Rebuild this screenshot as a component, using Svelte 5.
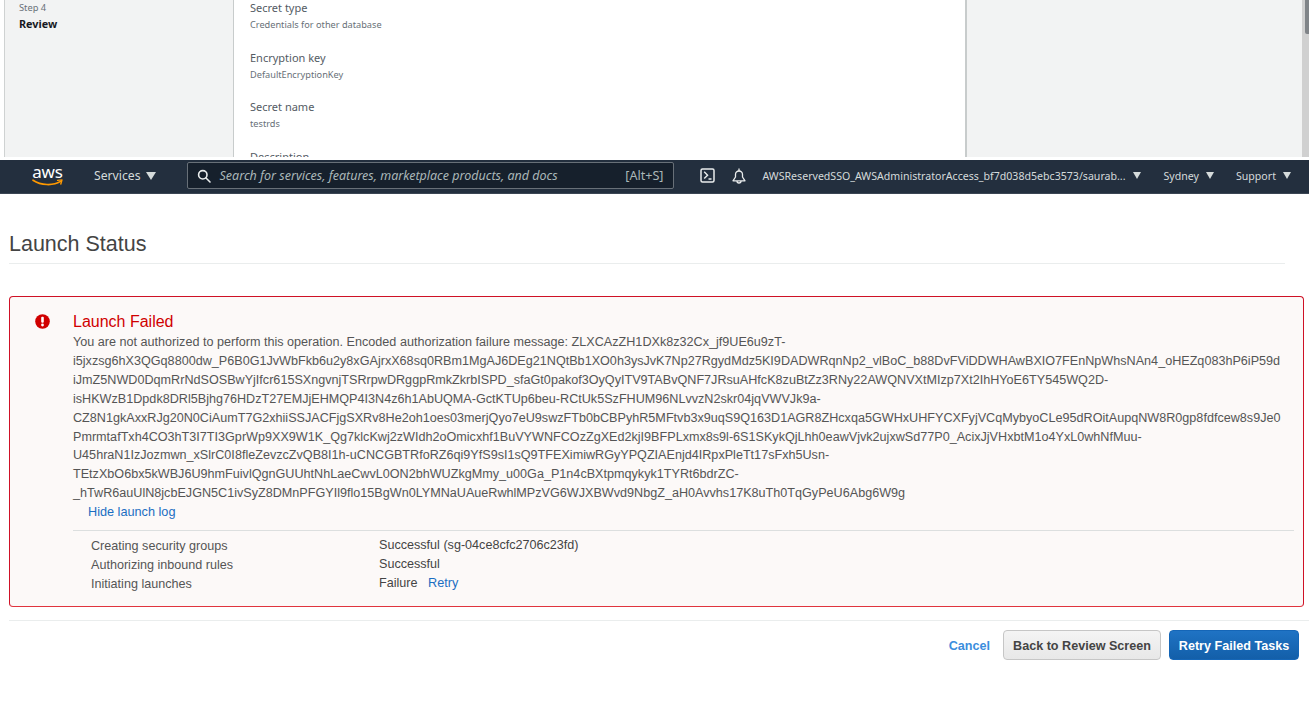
<script>
  const lines = [
    "You are not authorized to perform this operation. Encoded authorization failure message: ZLXCAzZH1DXk8z32Cx_jf9UE6u9zT-",
    "i5jxzsg6hX3QGq8800dw_P6B0G1JvWbFkb6u2y8xGAjrxX68sq0RBm1MgAJ6DEg21NQtBb1XO0h3ysJvK7Np27RgydMdz5KI9DADWRqnNp2_vlBoC_b88DvFViDDWHAwBXIO7FEnNpWhsNAn4_oHEZq083hP6iP59d",
    "iJmZ5NWD0DqmRrNdSOSBwYjIfcr615SXngvnjTSRrpwDRggpRmkZkrbISPD_sfaGt0pakof3OyQyITV9TABvQNF7JRsuAHfcK8zuBtZz3RNy22AWQNVXtMIzp7Xt2IhHYoE6TY545WQ2D-",
    "isHKWzB1Dpdk8DRl5Bjhg76HDzT27EMJjEHMQP4I3N4z6h1AbUQMA-GctKTUp6beu-RCtUk5SzFHUM96NLvvzN2skr04jqVWVJk9a-",
    "CZ8N1gkAxxRJg20N0CiAumT7G2xhiiSSJACFjgSXRv8He2oh1oes03merjQyo7eU9swzFTb0bCBPyhR5MFtvb3x9uqS9Q163D1AGR8ZHcxqa5GWHxUHFYCXFyjVCqMybyoCLe95dROitAupqNW8R0gp8fdfcew8s9Je0",
    "PmrmtafTxh4CO3hT3I7TI3GprWp9XX9W1K_Qg7klcKwj2zWIdh2oOmicxhf1BuVYWNFCOzZgXEd2kjI9BFPLxmx8s9l-6S1SKykQjLhh0eawVjvk2ujxwSd77P0_AcixJjVHxbtM1o4YxL0whNfMuu-",
    "U45hraN1IzJozmwn_xSlrC0I8fleZevzcZvQB8I1h-uCNCGBTRfoRZ6qi9YfS9sI1sQ9TFEXimiwRGyYPQZIAEnjd4IRpxPleTt17sFxh5Usn-",
    "TEtzXbO6bx5kWBJ6U9hmFuivlQgnGUUhtNhLaeCwvL0ON2bhWUZkgMmy_u00Ga_P1n4cBXtpmqykyk1TYRt6bdrZC-",
    "_hTwR6auUlN8jcbEJGN5C1ivSyZ8DMnPFGYIl9flo15BgWn0LYMNaUAueRwhlMPzVG6WJXBWvd9NbgZ_aH0Avvhs17K8uTh0TqGyPeU6Abg6W9g"
  ];
  const details = [
    ["Secret type", "Credentials for other database"],
    ["Encryption key", "DefaultEncryptionKey"],
    ["Secret name", "testrds"],
    ["Description", ""]
  ];
</script>

<div class="page">
  <section class="wizard">
    <aside class="steps">
      <div class="step-no">Step 4</div>
      <div class="step-name">Review</div>
    </aside>
    <div class="review">
      {#each details as [label, value]}
        <div class="field">
          <div class="label">{label}</div>
          <div class="value">{value}</div>
        </div>
      {/each}
    </div>
    <div class="rail"></div>
    <div class="scrollbar"><div class="thumb"></div></div>
  </section>

  <nav class="nav">
    <div class="logo">
      <span>aws</span>
      <svg width="31" height="8" viewBox="0 0 31 8" fill="none">
        <path d="M1 1.2C9 6.5 21 7 28.5 2.4" stroke="#f90" stroke-width="1.7" stroke-linecap="round"/>
        <path d="M25.6 1.4L30 .9 28.8 5" stroke="#f90" stroke-width="1.4" stroke-linecap="round" stroke-linejoin="round"/>
      </svg>
    </div>
    <div class="services">Services <i class="tri big"></i></div>
    <div class="search">
      <svg width="14" height="14" viewBox="0 0 14 14" fill="none" stroke="#eaeded" stroke-width="1.6">
        <circle cx="5.8" cy="5.8" r="4.2"/>
        <path d="M9 9l4 4" stroke-linecap="round"/>
      </svg>
      <span class="ph">Search for services, features, marketplace products, and docs</span>
      <span class="kbd">[Alt+S]</span>
    </div>
    <svg class="cli" width="15" height="15" viewBox="0 0 15 15" fill="none" stroke="#eaeded" stroke-width="1.5">
      <rect x="1" y="1" width="13" height="13" rx="1.5"/>
      <path d="M4.2 3.8l3.4 3.4-3.4 3.4M8.5 11h3" stroke-width="1.4"/>
    </svg>
    <svg class="bell" width="14" height="17" viewBox="0 0 14 17" fill="none" stroke="#eaeded" stroke-width="1.3">
      <path d="M1 12.8h12L10.5 9V6.5a3.5 3.5 0 0 0-7 0V9z" stroke-linejoin="round"/>
      <path d="M7 .6v2.4M5 13a2 2 0 0 0 4 0"/>
    </svg>
    <div class="account">AWSReservedSSO_AWSAdministratorAccess_bf7d038d5ebc3573/saurab...</div>
    <i class="tri"></i>
    <div class="region">Sydney</div>
    <i class="tri"></i>
    <div class="support">Support</div>
    <i class="tri"></i>
  </nav>

  <main class="content">
    <h1>Launch Status</h1>

    <div class="alert">
      <svg class="alert-icon" width="15" height="15" viewBox="0 0 15 15">
        <circle cx="7.5" cy="7.5" r="7.3" fill="#d00000"/>
        <rect x="6.2" y="2.8" width="2.6" height="6" rx="1" fill="#fff"/>
        <circle cx="7.5" cy="11" r="1.4" fill="#fff"/>
      </svg>
      <div class="alert-body">
        <h2>Launch Failed</h2>
        <div class="message">
          {#each lines as line}
            <div>{line}</div>
          {/each}
        </div>
        <a class="link hide" href="#log">Hide launch log</a>
        <div class="log">
          <div class="log-col names">
            <div>Creating security groups</div>
            <div>Authorizing inbound rules</div>
            <div>Initiating launches</div>
          </div>
          <div class="log-col results">
            <div>Successful (sg-04ce8cfc2706c23fd)</div>
            <div>Successful</div>
            <div>Failure <a class="link retry" href="#retry">Retry</a></div>
          </div>
        </div>
      </div>
    </div>

    <footer class="actions">
      <a class="cancel" href="#cancel">Cancel</a>
      <button class="btn back">Back to Review Screen</button>
      <button class="btn primary">Retry Failed Tasks</button>
    </footer>
  </main>
</div>

<style>
  :global(body) {
    margin: 0;
    background: #fff;
  }
  .page {
    width: 1309px;
    height: 701px;
    overflow: hidden;
    font-family: "Liberation Sans", Arial, sans-serif;
  }

  .wizard {
    display: flex;
    height: 157px;
    padding-left: 4px;
    overflow: hidden;
    font-family: "Noto Sans", sans-serif;
    box-sizing: border-box;
  }
  .steps {
    width: 214px;
    padding: 1px 0 0 14px;
    background: #f2f3f3;
    border-left: 1px solid #cfd2d2;
    border-right: 1px solid #c8cccc;
  }
  .step-no {
    font-size: 9.3px;
    line-height: 14px;
    color: #687078;
  }
  .step-name {
    font-size: 10.8px;
    font-weight: 700;
    line-height: 18px;
    color: #16191f;
  }
  .review {
    width: 715px;
    padding: 0 0 0 16px;
    border-right: 2px solid #c8cccc;
  }
  .field {
    height: 49.6px;
  }
  .label {
    font-size: 11px;
    line-height: 15px;
    color: #545b64;
  }
  .value {
    margin-top: 3px;
    font-size: 9.2px;
    line-height: 14px;
    color: #687078;
  }
  .rail {
    width: 335px;
    background: #f2f3f3;
  }
  .scrollbar {
    width: 7px;
    background: #d0d0d0;
  }
  .thumb {
    height: 34px;
    margin-left: 3px;
    background: #808488;
    border-radius: 0 0 0 2px;
  }

  .nav {
    display: flex;
    align-items: center;
    margin-top: 3px;
    padding-bottom: 2px;
    box-sizing: border-box;
    height: 34px;
    background: #232f3e;
    border-bottom: 1px solid #3a4553;
    font-family: "Noto Sans", sans-serif;
    color: #d5dbdb;
    font-size: 11px;
  }
  .logo {
    display: flex;
    flex-direction: column;
    align-items: center;
    width: 31px;
    margin-left: 32px;
    margin-top: 0;
    color: #fff;
  }
  .logo span {
    font-size: 17px;
    line-height: 13px;
    letter-spacing: -0.2px;
  }
  .logo svg {
    margin-top: 1px;
  }
  .services {
    display: flex;
    align-items: center;
    gap: 5px;
    margin-left: 31px;
    font-size: 12.2px;
  }
  .tri {
    display: block;
    width: 0;
    height: 0;
    border-left: 4.5px solid transparent;
    border-right: 4.5px solid transparent;
    border-top: 7px solid #d5dbdb;
  }
  .tri.big {
    border-left-width: 5.5px;
    border-right-width: 5.5px;
    border-top-width: 8px;
  }
  .search {
    display: flex;
    align-items: center;
    box-sizing: border-box;
    width: 487px;
    height: 27px;
    margin-left: 31px;
    padding: 0 9px;
    background: #16202c;
    border: 1px solid #687078;
    border-radius: 2px;
  }
  .ph {
    flex: 1;
    margin-left: 9px;
    font-size: 12.5px;
    font-style: italic;
    color: #aab7b8;
    white-space: nowrap;
  }
  .kbd {
    font-size: 12.6px;
    color: #aab7b8;
  }
  .cli {
    margin-left: 26px;
  }
  .bell {
    margin-left: 17px;
    margin-top: 2px;
  }
  .account {
    width: 363px;
    margin-left: 17px;
    margin-right: 7px;
    font-size: 10.6px;
    white-space: nowrap;
  }
  .region {
    margin-left: 23px;
    margin-right: 7px;
    font-size: 10.6px;
  }
  .support {
    margin-left: 22px;
    margin-right: 7px;
    font-size: 10.6px;
  }

  .content {
    padding-left: 9px;
    color: #444;
  }
  h1 {
    width: 1276px;
    height: 70px;
    margin: 0;
    box-sizing: border-box;
    padding-top: 37px;
    border-bottom: 1px solid #eaeded;
    font-size: 21.5px;
    font-weight: 400;
    line-height: 26px;
    color: #444;
  }
  .alert {
    display: flex;
    box-sizing: border-box;
    width: 1295px;
    height: 311px;
    margin-top: 32px;
    padding: 16px 0 0 25px;
    background: #fcf9f8;
    border: 1px solid #cf1126;
    border-bottom-color: #e0343e;
    border-radius: 4px;
  }
  .alert-icon {
    margin-top: 1px;
    flex: none;
  }
  .alert-body {
    flex: 1;
    margin-left: 23px;
  }
  h2 {
    margin: 0;
    font-size: 16px;
    font-weight: 400;
    line-height: 18px;
    color: #d00000;
  }
  .message {
    margin-top: 2px;
    font-size: 12.62px;
    line-height: 18.9px;
    color: #555;
    white-space: nowrap;
  }
  .link {
    color: #1b6ec2;
    text-decoration: none;
    font-size: 12.7px;
  }
  .hide {
    display: block;
    margin-top: 0;
    padding-left: 15px;
    line-height: 19px;
  }
  .log {
    display: flex;
    width: 1221px;
    margin-top: 8px;
    padding-top: 5px;
    border-top: 1px solid #dcdfdf;
    font-size: 12.6px;
    line-height: 19px;
    color: #555;
  }
  .names {
    padding-left: 18px;
    box-sizing: border-box;
    padding-top: 1px;
    width: 306px;
  }
  .results {
    color: #444;
  }
  .retry {
    margin-left: 7px;
  }

  .actions {
    display: flex;
    align-items: flex-start;
    justify-content: flex-end;
    box-sizing: border-box;
    width: 1300px;
    height: 55px;
    margin-top: 13px;
    padding: 9px 10px 0 0;
    border-top: 1px solid #eaeded;
  }
  .cancel {
    margin-right: 13px;
    color: #3b8ddd;
    font-size: 12.6px;
    font-weight: 700;
    line-height: 32px;
    text-decoration: none;
  }
  .btn {
    height: 30px;
    box-sizing: border-box;
    font-family: inherit;
    font-size: 12.6px;
    font-weight: 700;
    border-radius: 4px;
    padding: 2px 0 0;
  }
  .back {
    width: 158px;
    color: #444;
    background: linear-gradient(#f4f4f4, #e8e8e8);
    border: 1px solid #c6c6c6;
  }
  .primary {
    width: 130px;
    margin-left: 8px;
    color: #fff;
    background: linear-gradient(#1f73c4, #135fa9);
    border: 1px solid #1566b7;
  }
</style>
